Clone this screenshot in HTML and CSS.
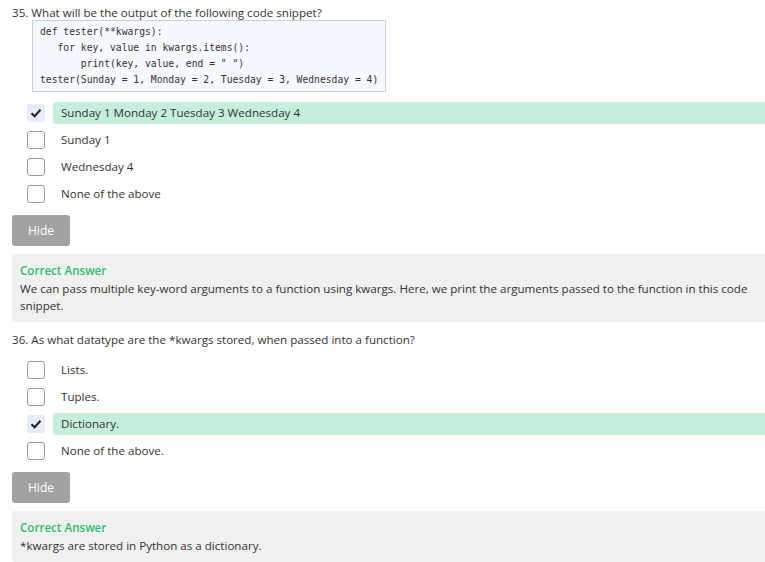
FILE: index.html
```html
<!DOCTYPE html>
<html>
<head>
<meta charset="utf-8">
<link rel="stylesheet" href="styles.css">
</head>
<body>
<div class="page">
  <section class="q">
    <div class="q-title">35. What will be the output of the following code snippet?</div>
    <pre class="code">def tester(**kwargs):
   for key, value in kwargs.items():
       print(key, value, end = " ")
tester(Sunday = 1, Monday = 2, Tuesday = 3, Wednesday = 4)</pre>
    <ul class="opts">
      <li class="opt correct"><span class="box checked"><svg viewBox="0 0 18 18" width="18" height="18"><path d="M4.5 9.2 L7.6 12.2 L13.5 5.8" fill="none" stroke="#222" stroke-width="2"/></svg></span><span class="label">Sunday 1 Monday 2 Tuesday 3 Wednesday 4</span></li>
      <li class="opt"><span class="box"></span><span class="label">Sunday 1</span></li>
      <li class="opt"><span class="box"></span><span class="label">Wednesday 4</span></li>
      <li class="opt"><span class="box"></span><span class="label">None of the above</span></li>
    </ul>
    <button class="hide">Hide</button>
    <div class="answer">
      <div class="ans-title">Correct Answer</div>
      <div class="ans-text">We can pass multiple key-word arguments to a function using kwargs. Here, we print the arguments passed to the function in this code snippet.</div>
    </div>
  </section>
  <section class="q q2">
    <div class="q-title">36. As what datatype are the *kwargs stored, when passed into a function?</div>
    <ul class="opts">
      <li class="opt"><span class="box"></span><span class="label">Lists.</span></li>
      <li class="opt"><span class="box"></span><span class="label">Tuples.</span></li>
      <li class="opt correct"><span class="box checked"><svg viewBox="0 0 18 18" width="18" height="18"><path d="M4.5 9.2 L7.6 12.2 L13.5 5.8" fill="none" stroke="#222" stroke-width="2"/></svg></span><span class="label">Dictionary.</span></li>
      <li class="opt"><span class="box"></span><span class="label">None of the above.</span></li>
    </ul>
    <button class="hide">Hide</button>
    <div class="answer">
      <div class="ans-title">Correct Answer</div>
      <div class="ans-text">*kwargs are stored in Python as a dictionary.</div>
    </div>
  </section>
</div>
</body>
</html>
```
FILE: styles.css
```css
html, body {
  margin: 0;
  padding: 0;
  background: #fff;
}
body {
  font-family: "Open Sans", "Noto Sans", sans-serif;
  font-size: 11.6px;
  color: #333;
}
.page {
  padding: 5px 0 0 12px;
}
.q-title {
  line-height: 15px;
}
.q2 {
  margin-top: 10px;
}
.code {
  display: inline-block;
  margin: 0 0 0 20px;
  padding: 3px 7px;
  border: 1px solid #c8cfe0;
  background: #f6f8ff;
  font-family: "DejaVu Sans Mono", "Liberation Mono", monospace;
  font-size: 9.7px;
  line-height: 16px;
  color: #333;
}
.opts {
  list-style: none;
  margin: 10px 0 0 15px;
  padding: 0;
  display: flex;
  flex-direction: column;
  gap: 5px;
}
.q2 .opts {
  margin-top: 12px;
}
.opt {
  display: flex;
  align-items: center;
  height: 22px;
}
.box {
  flex: none;
  width: 18px;
  height: 18px;
  box-sizing: border-box;
  border: 1px solid #999;
  border-radius: 3px;
  background: #fff;
  margin-right: 8px;
  display: flex;
}
.box.checked {
  border: none;
  background: #e6ecfb;
}
.label {
  flex: 1;
  height: 22px;
  line-height: 22px;
  padding-left: 8px;
  border-radius: 3px 0 0 3px;
}
.correct .label {
  background: #c5efdb;
}
.hide {
  display: block;
  margin-top: 10px;
  width: 58px;
  height: 31px;
  border: none;
  border-radius: 3px;
  background: #a2a2a2;
  color: #fff;
  font-family: inherit;
  font-size: 12px;
  padding: 0;
}
.answer {
  margin-top: 8px;
  background: #f0f0f0;
  padding: 8px 8px 8px 8px;
  border-radius: 3px 0 0 3px;
}
.ans-title {
  color: #2ebd6b;
  font-weight: 600;
  line-height: 18px;
}
.ans-text {
  line-height: 17px;
}
```
